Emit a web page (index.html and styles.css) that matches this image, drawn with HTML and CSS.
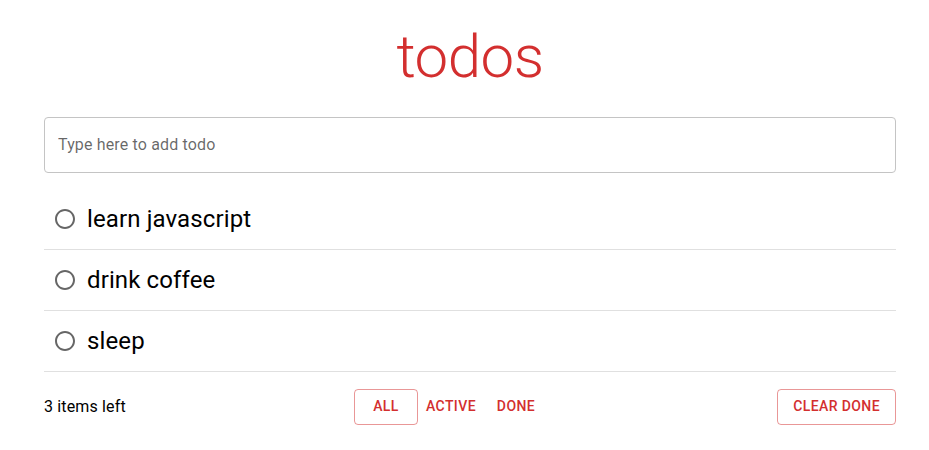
FILE: index.html
```html
<!DOCTYPE html>
<html lang="en">
<head>
<meta charset="utf-8">
<title>todos</title>
<link rel="stylesheet" href="styles.css">
</head>
<body>
<main class="app">
  <h1 class="title">todos</h1>
  <div class="field">
    <input class="field-input" type="text" placeholder="Type here to add todo">
  </div>
  <ul class="list">
    <li class="item">
      <svg class="radio" viewBox="0 0 24 24" width="24" height="24"><path d="M12 2C6.48 2 2 6.48 2 12s4.48 10 10 10 10-4.48 10-10S17.52 2 12 2zm0 18c-4.42 0-8-3.58-8-8s3.58-8 8-8 8 3.58 8 8-3.58 8-8 8z"/></svg>
      <span class="item-text">learn javascript</span>
    </li>
    <li class="item">
      <svg class="radio" viewBox="0 0 24 24" width="24" height="24"><path d="M12 2C6.48 2 2 6.48 2 12s4.48 10 10 10 10-4.48 10-10S17.52 2 12 2zm0 18c-4.42 0-8-3.58-8-8s3.58-8 8-8 8 3.58 8 8-3.58 8-8 8z"/></svg>
      <span class="item-text">drink coffee</span>
    </li>
    <li class="item">
      <svg class="radio" viewBox="0 0 24 24" width="24" height="24"><path d="M12 2C6.48 2 2 6.48 2 12s4.48 10 10 10 10-4.48 10-10S17.52 2 12 2zm0 18c-4.42 0-8-3.58-8-8s3.58-8 8-8 8 3.58 8 8-3.58 8-8 8z"/></svg>
      <span class="item-text">sleep</span>
    </li>
  </ul>
  <footer class="footer">
    <span class="count">3 items left</span>
    <div class="filters">
      <button class="btn btn-outlined">All</button>
      <button class="btn btn-text">Active</button>
      <button class="btn btn-text">Done</button>
    </div>
    <button class="btn btn-outlined btn-clear">Clear done</button>
  </footer>
</main>
</body>
</html>
```
FILE: styles.css
```css
* { box-sizing: border-box; }
html, body { margin: 0; padding: 0; background: #fff; }
body { font-family: Roboto, "Noto Sans", Arial, sans-serif; color: rgba(0,0,0,0.87); }

.app {
  width: 852px;
  margin: 0 0 0 44px;
  padding-top: 21px;
}

.title {
  margin: 0 0 24px;
  text-align: center;
  font-size: 60px;
  font-weight: 300;
  line-height: 1.2;
  color: #d32f2f;
  letter-spacing: -0.00833em;
}

.field {
  border: 1px solid #c4c4c4;
  border-radius: 4px;
  height: 56px;
  display: flex;
  align-items: center;
  padding-bottom: 2px;
}

.field-input {
  border: 0;
  outline: none;
  background: transparent;
  width: 100%;
  padding: 0 13px;
  font-family: Roboto, sans-serif;
  font-size: 16px;
  letter-spacing: 0.00938em;
  color: rgba(0,0,0,0.87);
}
.field-input::placeholder { color: rgba(0,0,0,0.6); opacity: 1; }

.list {
  list-style: none;
  margin: 16px 0 0;
  padding: 0;
}

.item {
  display: flex;
  align-items: center;
  height: 61px;
  padding-left: 9px;
  border-bottom: 1px solid rgba(0,0,0,0.12);
}

.radio {
  fill: rgba(0,0,0,0.6);
  flex: none;
}

.item-text {
  margin-left: 10px;
  font-size: 24px;
  font-weight: 400;
  letter-spacing: 0.005em;
  color: #000;
}

.footer {
  display: grid;
  grid-template-columns: 310px auto 1fr;
  align-items: center;
  height: 69px;
}

.count {
  font-size: 16px;
  letter-spacing: 0.00938em;
  color: #000;
  padding-bottom: 1px;
}

.filters { display: flex; align-items: center; }

.btn {
  font-family: Roboto, sans-serif;
  font-size: 14px;
  font-weight: 500;
  letter-spacing: 0.02857em;
  text-transform: uppercase;
  color: #d32f2f;
  background: transparent;
  height: 36px;
  min-width: 64px;
  border-radius: 4px;
  cursor: pointer;
  line-height: 1.75;
}

.btn-outlined {
  border: 1px solid rgba(211,47,47,0.5);
  padding: 0 15px;
}

.btn-text {
  border: 0;
  padding: 0 8px;
}

.btn-clear { justify-self: end; }
```
